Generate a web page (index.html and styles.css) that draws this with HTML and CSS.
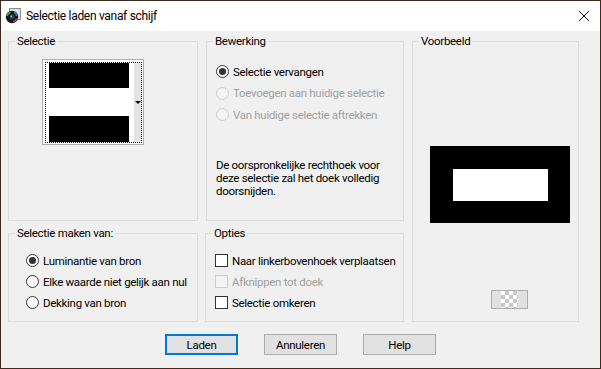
FILE: index.html
```html
<!DOCTYPE html>
<html lang="nl">
<head>
  <meta charset="UTF-8">
  <title>Selectie laden vanaf schijf</title>
  <link rel="stylesheet" href="styles.css">
</head>
<body>

  <div class="window">

    <!-- TITLE BAR -->
    <div class="titlebar">
      <svg class="app-icon" viewBox="0 0 16 16">
        <rect x="4.5" y="0.5" width="11" height="11" fill="#e2e2e2" stroke="#8c8c8c"/>
        <circle cx="7" cy="9" r="6.2" fill="#151515"/>
        <path d="M2 8 A5 5 0 0 1 5.5 4.2" stroke="#3fbf3f" stroke-width="1.6" fill="none"/>
        <path d="M9 4.3 A5 5 0 0 1 11.8 8" stroke="#3a7fe0" stroke-width="1.6" fill="none"/>
        <path d="M11.6 10.5 A5 5 0 0 1 8 13.8" stroke="#d83a3a" stroke-width="1.4" fill="none"/>
        <circle cx="7" cy="9" r="2.4" fill="#2e4a6a"/>
        <circle cx="6.2" cy="8.2" r="0.8" fill="#9fd0ff"/>
      </svg>
      <span class="title">Selectie laden vanaf schijf</span>
      <svg class="close" viewBox="0 0 10 10">
        <path d="M0 0L10 10M10 0L0 10" stroke="#111" stroke-width="1" fill="none"/>
      </svg>
    </div>

    <!-- DIALOG BODY -->
    <div class="content">
      <div class="groups">

        <fieldset class="group group-selectie">
          <legend>Selectie</legend>
          <div class="picker">
            <div class="picker-focus">
              <div class="swatch">
                <div class="swatch-black"></div>
                <div class="swatch-white"></div>
                <div class="swatch-black swatch-black-low"></div>
              </div>
              <div class="picker-strip"><span class="picker-arrow"></span></div>
            </div>
          </div>
        </fieldset>

        <fieldset class="group group-bewerking">
          <legend>Bewerking</legend>
          <div class="options options-wide">
            <label class="option"><span class="radio checked"></span>Selectie vervangen</label>
            <label class="option disabled"><span class="radio"></span>Toevoegen aan huidige selectie</label>
            <label class="option disabled"><span class="radio"></span>Van huidige selectie aftrekken</label>
          </div>
          <p class="note">De oorspronkelijke rechthoek voor<br>deze selectie zal het doek volledig<br>doorsnijden.</p>
        </fieldset>

        <fieldset class="group group-voorbeeld">
          <legend>Voorbeeld</legend>
          <div class="preview">
            <div class="preview-inner"></div>
          </div>
          <div class="checker-btn"><span class="checker"></span></div>
        </fieldset>

        <fieldset class="group group-maken">
          <legend>Selectie maken van:</legend>
          <div class="options options-low">
            <label class="option"><span class="radio checked"></span>Luminantie van bron</label>
            <label class="option"><span class="radio"></span>Elke waarde niet gelijk aan nul</label>
            <label class="option"><span class="radio"></span>Dekking van bron</label>
          </div>
        </fieldset>

        <fieldset class="group group-opties">
          <legend>Opties</legend>
          <div class="options options-low">
            <label class="option"><span class="check"></span>Naar linkerbovenhoek verplaatsen</label>
            <label class="option disabled"><span class="check"></span>Afknippen tot doek</label>
            <label class="option"><span class="check"></span>Selectie omkeren</label>
          </div>
        </fieldset>

      </div>

      <div class="buttons">
        <button class="btn btn-default">Laden</button>
        <button class="btn">Annuleren</button>
        <button class="btn">Help</button>
      </div>
    </div>

  </div>

</body>
</html>
```

FILE: styles.css
```css
body {
  margin: 0;
  font-family: Roboto, 'Liberation Sans', Arial, sans-serif;
  font-size: 11.5px;
  letter-spacing: -0.3px;
  color: #000;
  background: #fff;
}

.window {
  width: 601px;
  height: 369px;
  box-sizing: border-box;
  border: 1px solid #3d2a1e;
  background: #f0f0f0;
  display: flex;
  flex-direction: column;
}

/* Title bar */
.titlebar {
  height: 30px;
  flex-shrink: 0;
  background: #fff;
  display: flex;
  align-items: center;
}

.app-icon {
  width: 16px;
  height: 16px;
  margin-left: 4px;
  margin-right: 5px;
}

.title {
  flex: 1;
  font-size: 12px;
}

.close {
  width: 10px;
  height: 10px;
  margin-right: 11px;
}

/* Groups */
.content {
  padding: 3px 0 0 7px;
}

.groups {
  display: grid;
  grid-template-columns: 190px 199px 168px;
  grid-template-rows: 187px 96px;
  column-gap: 7px;
  row-gap: 5px;
}

.group {
  margin: 0;
  padding: 0;
  min-width: 0;
  box-sizing: border-box;
  border: 1px solid #dcdcdc;
}

.group legend {
  padding: 0 2px;
  margin-left: 6px;
  line-height: 14px;
}

.group-bewerking {
  margin-left: 1px;
}

.group-voorbeeld {
  grid-column: 3;
  grid-row: 1 / span 2;
  margin-left: 1px;
}

.group-maken {
  grid-column: 1;
  grid-row: 2;
}

.group-opties {
  grid-column: 2;
  grid-row: 2;
}

/* Selection picker */
.picker {
  width: 102px;
  height: 86px;
  box-sizing: border-box;
  margin: 11px 0 0 33px;
  padding: 2px 1px 1px 2px;
  border: 1px solid #adadad;
  background: #fff;
}

.picker-focus {
  height: 100%;
  box-sizing: border-box;
  border: 1px dotted #000;
  display: flex;
}

.swatch {
  width: 80px;
  margin-left: 3px;
  margin-right: 5px;
  display: flex;
  flex-direction: column;
}

.swatch-black {
  height: 25px;
  background: #000;
}

.swatch-white {
  height: 28px;
}

.swatch-black-low {
  height: 26px;
}

.picker-strip {
  width: 7px;
  background: #e3e3e3;
  display: flex;
  align-items: center;
  justify-content: center;
}

.picker-arrow {
  width: 0;
  height: 0;
  border-left: 3px solid transparent;
  border-right: 3px solid transparent;
  border-top: 3px solid #000;
}

/* Radios and checkboxes */
.options {
  margin-left: 9px;
}

.options-wide {
  margin-top: 13px;
}

.options-wide .option {
  height: 21.5px;
}

.options-low {
  margin-top: 10px;
}

.group-maken .options {
  margin-left: 17px;
}

.option {
  display: flex;
  align-items: center;
  height: 21px;
  white-space: nowrap;
}

.radio,
.check {
  width: 13px;
  height: 13px;
  box-sizing: border-box;
  border: 1px solid #333;
  background: #fff;
  margin-right: 4px;
  flex-shrink: 0;
  display: flex;
  align-items: center;
  justify-content: center;
}

.radio {
  border-radius: 50%;
}

.radio.checked::after {
  content: "";
  width: 7px;
  height: 7px;
  border-radius: 50%;
  background: #333;
}

.option.disabled {
  color: #a0a0a0;
}

.option.disabled .radio,
.option.disabled .check {
  border-color: #cccccc;
  background: #f4f4f4;
}

.note {
  margin: 33px 0 0 9px;
  line-height: 13px;
}

/* Preview */
.preview {
  width: 140px;
  height: 77px;
  box-sizing: border-box;
  margin: 98px 0 0 17px;
  padding: 23px 22px 22px 23px;
  background: #000;
}

.preview-inner {
  height: 100%;
  background: #fff;
}

.checker-btn {
  width: 37px;
  height: 19px;
  box-sizing: border-box;
  margin: 67px 0 0 78px;
  border: 1px solid #adadad;
  background: #e1e1e1;
  display: flex;
  justify-content: center;
}

.checker {
  width: 17px;
  background: repeating-conic-gradient(#c8c8c8 0 25%, #fff 0 50%) 0 0 / 8px 8px;
}

/* Buttons */
.buttons {
  display: flex;
  justify-content: center;
  gap: 26px;
  margin-top: 12px;
  padding-right: 7px;
}

.btn {
  width: 73px;
  height: 21px;
  box-sizing: border-box;
  padding: 0;
  border: 1px solid #adadad;
  background: #e1e1e1;
  font: inherit;
  letter-spacing: inherit;
  color: #000;
}

.btn-default {
  border: 2px solid #0078d7;
}
```
